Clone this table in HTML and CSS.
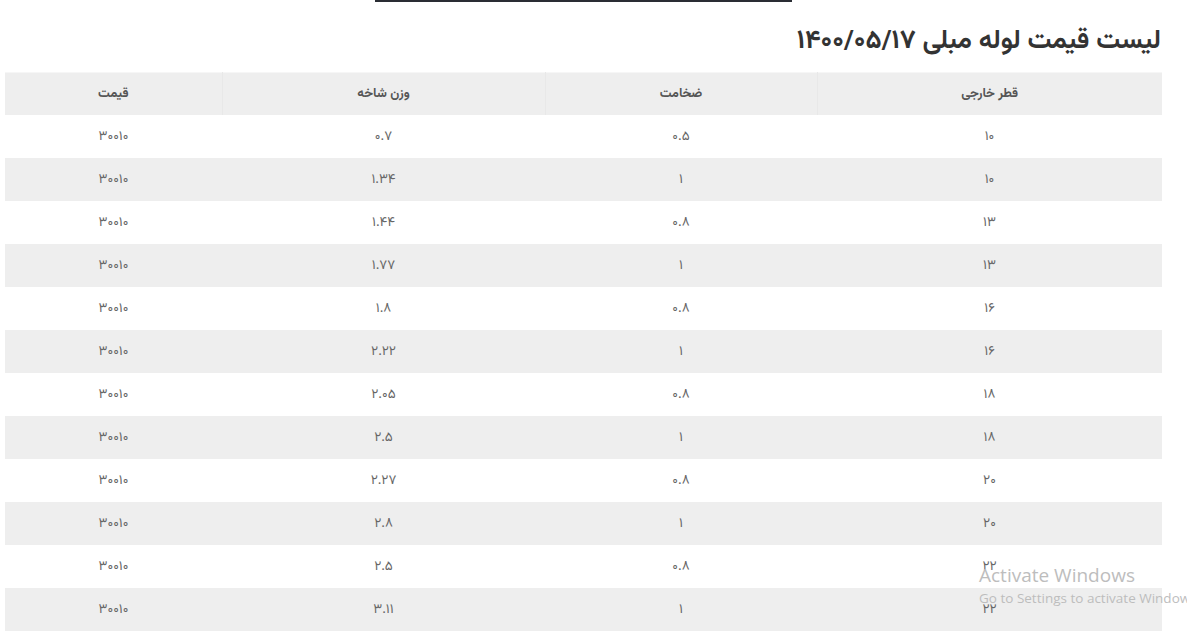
FILE: index.html
```html
<!DOCTYPE html>
<html lang="fa" dir="rtl">
<head>
<meta charset="utf-8">
<title>لیست قیمت لوله مبلی</title>
<link rel="stylesheet" href="styles.css">
</head>
<body>
<div class="page">
  <div class="topline"></div>
  <h2 class="title">لیست قیمت لوله مبلی ۱۴۰۰/۰۵/۱۷</h2>
  <table class="price-table">
    <colgroup>
      <col class="c1"><col class="c2"><col class="c3"><col class="c4">
    </colgroup>
    <thead>
      <tr><th>قطر خارجی</th><th>ضخامت</th><th>وزن شاخه</th><th>قیمت</th></tr>
    </thead>
    <tbody>
      <tr><td>۱۰</td><td>۰.۵</td><td>۰.۷</td><td>۳۰۰۱۰</td></tr>
      <tr><td>۱۰</td><td>۱</td><td>۱.۳۴</td><td>۳۰۰۱۰</td></tr>
      <tr><td>۱۳</td><td>۰.۸</td><td>۱.۴۴</td><td>۳۰۰۱۰</td></tr>
      <tr><td>۱۳</td><td>۱</td><td>۱.۷۷</td><td>۳۰۰۱۰</td></tr>
      <tr><td>۱۶</td><td>۰.۸</td><td>۱.۸</td><td>۳۰۰۱۰</td></tr>
      <tr><td>۱۶</td><td>۱</td><td>۲.۲۲</td><td>۳۰۰۱۰</td></tr>
      <tr><td>۱۸</td><td>۰.۸</td><td>۲.۰۵</td><td>۳۰۰۱۰</td></tr>
      <tr><td>۱۸</td><td>۱</td><td>۲.۵</td><td>۳۰۰۱۰</td></tr>
      <tr><td>۲۰</td><td>۰.۸</td><td>۲.۲۷</td><td>۳۰۰۱۰</td></tr>
      <tr><td>۲۰</td><td>۱</td><td>۲.۸</td><td>۳۰۰۱۰</td></tr>
      <tr><td>۲۲</td><td>۰.۸</td><td>۲.۵</td><td>۳۰۰۱۰</td></tr>
      <tr><td>۲۲</td><td>۱</td><td>۳.۱۱</td><td>۳۰۰۱۰</td></tr>
    </tbody>
  </table>
</div>
<div class="activate" dir="ltr">
  <div class="act-title">Activate Windows</div>
  <div class="act-sub">Go to Settings to activate Windows.</div>
</div>
</body>
</html>
```
FILE: styles.css
```css
html, body {
  margin: 0;
  padding: 0;
  background: #ffffff;
  overflow: hidden;
}
body {
  font-family: "Vazirmatn", "Noto Sans Arabic", "Noto Naskh Arabic", "DejaVu Sans", "Noto Sans", sans-serif;
  color: #333;
}
.page {
  width: 1157px;
  margin: 0 25px 0 5px;
  display: flex;
  flex-direction: column;
  align-items: stretch;
}
.topline {
  align-self: center;
  width: 417px;
  height: 2px;
  background: #2a2d34;
}
.title {
  margin: 0;
  padding: 22px 1px 0 0;
  height: 70px;
  box-sizing: border-box;
  font-size: 26.5px;
  font-weight: bold;
  line-height: 36px;
  color: #333;
  text-align: right;
}
.price-table {
  width: 1157px;
  border-collapse: collapse;
  table-layout: fixed;
}
.c1 { width: 345px; }
.c2 { width: 272px; }
.c3 { width: 323px; }
.c4 { width: 217px; }
.price-table th {
  height: 43px;
  padding: 0;
  background: #eeeeee;
  color: #555;
  font-size: 13px;
  font-weight: bold;
  text-align: center;
  box-shadow: inset 0 1px #f6f6f6;
  border-left: 1px solid #e8e8e8;
  box-sizing: border-box;
}
.price-table th:last-child {
  border-left: none;
}
.price-table td {
  height: 43px;
  padding: 0;
  color: #666;
  font-size: 13.5px;
  text-align: center;
  box-sizing: border-box;
}
.price-table tbody tr:nth-child(even) td {
  background: #eeeeee;
}
.activate {
  position: absolute;
  left: 979px;
  top: 563px;
  color: #bdbdbd;
  font-family: "Open Sans", "Liberation Sans", sans-serif;
  white-space: nowrap;
}
.act-title {
  font-size: 19px;
  line-height: 24px;
}
.act-sub {
  font-size: 13.5px;
  line-height: 20px;
  margin-top: 1px;
}
```
